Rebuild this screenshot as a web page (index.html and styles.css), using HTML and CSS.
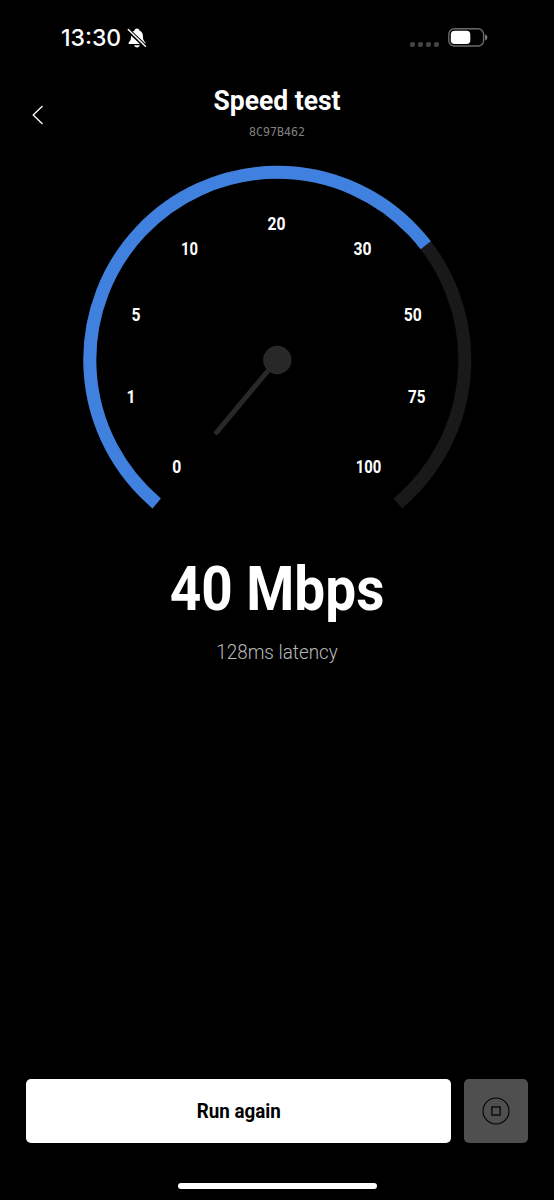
FILE: index.html
```html
<!DOCTYPE html>
<html lang="en">
  <head>
    <meta charset="UTF-8" />
    <meta name="viewport" content="width=device-width, initial-scale=1.0" />
    <title>Speed test</title>

    <link rel="stylesheet" href="styles.css">
  </head>
  <body>
    <div class="screen">
      <div class="status-bar">
        <span class="clock">13:30</span>
        <svg class="bell" width="20" height="22" viewBox="0 0 20 22">
          <path fill="#fff" d="M10 1.5C8.6 1.5 7.8 2.4 7.6 3.4C5.1 4.3 4 6.5 4 9.5C4 12.8 3.4 13.6 1.9 15.2C1.2 16 1.6 17 2.6 17H17.4C18.4 17 18.8 16 18.1 15.2C16.6 13.6 16 12.8 16 9.5C16 6.5 14.9 4.3 12.4 3.4C12.2 2.4 11.4 1.5 10 1.5ZM7.2 18.2C7.5 19.6 8.5 20.4 10 20.4S12.5 19.6 12.8 18.2Z" />
          <path stroke="#000" stroke-width="4" d="M0 2L19 20" />
          <path stroke="#fff" stroke-width="1.5" stroke-linecap="round" d="M1.3 2.5L18.4 19.3" />
        </svg>
        <div class="signal"><i></i><i></i><i></i><i></i></div>
        <svg class="battery" width="40" height="20" viewBox="0 0 40 20">
          <rect x=".8" y=".8" width="34.8" height="17.2" rx="5.5" fill="none" stroke="#6b6b6b" stroke-width="1.4" />
          <rect x="2.8" y="2.8" width="19.5" height="13.2" rx="3.8" fill="#fff" />
          <path fill="#858585" d="M37.2 6.5C40 7.2 40 11.6 37.2 12.3Z" />
        </svg>
      </div>

      <header class="header">
        <button class="back" aria-label="Back">
          <svg width="12" height="20" viewBox="0 0 12 20">
            <path d="M10.5 1L1.2 10L10.5 19" fill="none" stroke="#fff" stroke-width="1.3" />
          </svg>
        </button>
        <div class="heading">
          <h1>Speed test</h1>
          <p>8C97B462</p>
        </div>
      </header>

      <svg class="gauge" width="400" height="360" viewBox="0 0 400 360">
        <path class="track" d="M79.7 343.4A187.5 187.5 0 1 1 320.9 343.4" />
        <path class="progress" pathLength="100" stroke-dasharray="68.7 100" d="M79.7 343.4A187.5 187.5 0 1 1 320.9 343.4" />
        <path class="needle" d="M200 200L139.6 272.4" />
        <circle class="hub" cx="200.3" cy="200" r="14.2" />
        <g class="labels">
          <text x="99.8" y="313.3" textLength="9" lengthAdjust="spacingAndGlyphs">0</text>
          <text x="54" y="243.3" textLength="9" lengthAdjust="spacingAndGlyphs">1</text>
          <text x="59" y="160.8" textLength="9" lengthAdjust="spacingAndGlyphs">5</text>
          <text x="112.5" y="94.8" textLength="17" lengthAdjust="spacingAndGlyphs">10</text>
          <text x="199.6" y="69.8" textLength="18" lengthAdjust="spacingAndGlyphs">20</text>
          <text x="285.5" y="94.8" textLength="18" lengthAdjust="spacingAndGlyphs">30</text>
          <text x="335.8" y="160.8" textLength="18" lengthAdjust="spacingAndGlyphs">50</text>
          <text x="339.8" y="243.3" textLength="17.5" lengthAdjust="spacingAndGlyphs">75</text>
          <text x="291.6" y="313.3" textLength="25.5" lengthAdjust="spacingAndGlyphs">100</text>
        </g>
      </svg>

      <div class="result">
        <p class="speed">40 Mbps</p>
        <p class="latency">128ms latency</p>
      </div>

      <div class="actions">
        <button class="run"><span>Run again</span></button>
        <button class="stop" aria-label="Stop">
          <svg width="28" height="28" viewBox="0 0 28 28" fill="none" stroke="#000">
            <circle cx="14" cy="14" r="13" stroke-width="1.1" />
            <rect x="9.9" y="9.9" width="8.2" height="8.2" stroke-width="1.2" />
          </svg>
        </button>
      </div>
      <div class="home-indicator"></div>
    </div>
  </body>
</html>
```
FILE: styles.css
```css
* {
  box-sizing: border-box;
}

body {
  margin: 0;
  background: #000;
  color: #fff;
  font-family: Roboto, "Liberation Sans", sans-serif;
}

h1,
p {
  margin: 0;
}

button {
  padding: 0;
  border: 0;
  font: inherit;
}

.screen {
  display: flex;
  flex-direction: column;
  width: 554px;
  height: 1200px;
}

.status-bar {
  display: flex;
  align-items: center;
  height: 76px;
  padding: 0 66px 0 61px;
}

.clock {
  width: 66px;
  font: 500 23px/28px Inter, sans-serif;
}

.signal {
  display: flex;
  gap: 3px;
  margin: 12px 9px 0 auto;
}

.signal i {
  width: 5px;
  height: 5px;
  border-radius: 2px;
  background: #444;
}

.header {
  display: grid;
  grid-template-columns: 76px 1fr 76px;
  height: 84px;
}

.back {
  height: 77px;
  background: none;
}

.back svg {
  display: block;
  margin: 0 auto;
}

.heading {
  padding-top: 9px;
  text-align: center;
}

.heading h1 {
  font-size: 27px;
  font-weight: 700;
  line-height: 32px;
  transform: scaleX(0.98);
}

.heading p {
  margin-top: 7px;
  color: #808080;
  font: 11.6px/16px "DejaVu Sans Mono", monospace;
}

.gauge {
  display: block;
  margin: 0 auto;
}

.track,
.progress {
  fill: none;
  stroke: #191919;
  stroke-width: 13;
}

.progress {
  stroke: #4080df;
}

.needle {
  stroke: #282828;
  stroke-width: 5;
  stroke-linecap: round;
}

.hub {
  fill: #282828;
}

.labels {
  fill: #fff;
  font-size: 18px;
  font-weight: 700;
  text-anchor: middle;
}

.result {
  padding-top: 31px;
  text-align: center;
}

.speed {
  font-size: 61px;
  font-weight: 700;
  line-height: 76px;
  transform: scaleX(0.9);
}

.latency {
  margin-top: 13px;
  color: #b8b8b8;
  font-size: 20.5px;
  font-weight: 300;
  line-height: 24px;
  transform: scaleX(0.92);
}

.actions {
  display: flex;
  gap: 13px;
  margin-top: auto;
  padding: 0 26px;
}

.run,
.stop {
  height: 64px;
  border-radius: 5px;
}

.run {
  flex: 1;
  background: #fff;
  color: #000;
  font-size: 20px;
  font-weight: 700;
}

.run span {
  display: inline-block;
  transform: scaleX(0.94);
}

.stop {
  display: flex;
  align-items: center;
  justify-content: center;
  width: 64px;
  background: #4f4f4f;
}

.home-indicator {
  width: 199px;
  height: 6px;
  margin: 40px auto 11px;
  border-radius: 3px;
  background: #fff;
}
```
